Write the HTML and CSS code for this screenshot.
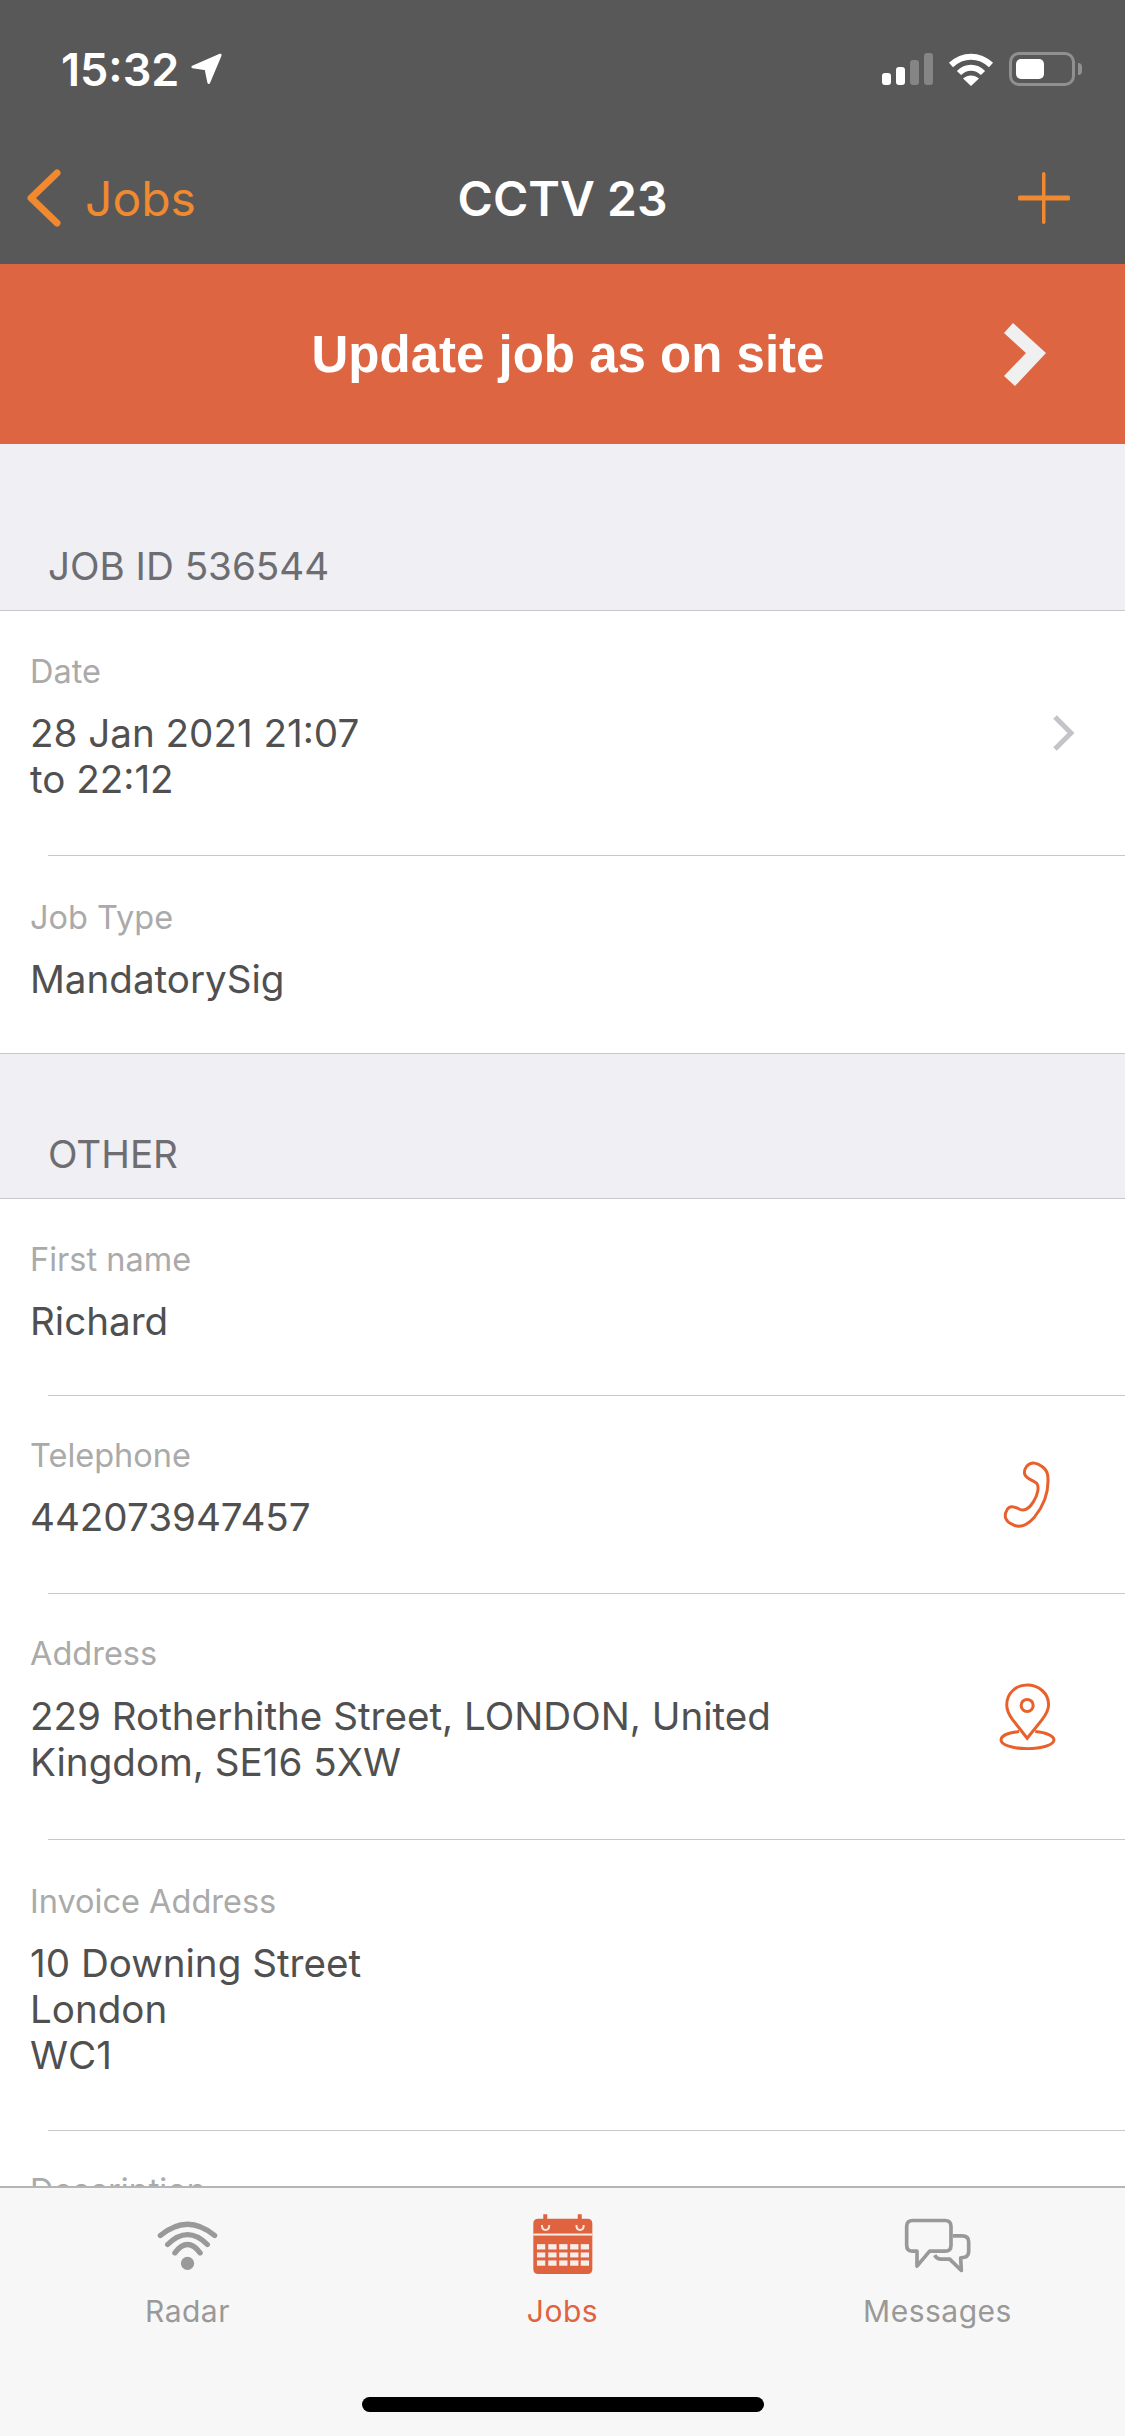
FILE: index.html
```html
<!DOCTYPE html>
<html lang="en">

<head>
    <meta charset="UTF-8">
    <meta name="viewport" content="width=device-width, initial-scale=1.0">
    <title>CCTV 23</title>
    <link rel="stylesheet" href="styles.css">
</head>

<body>
    <div class="phone">
        <header class="top-bar">
            <div class="status-bar">
                <div class="status-time">
                    <span>15:32</span>
                    <svg class="icon-location" viewBox="448 70 95 92">
                        <path d="M535 76 L456 110 L494 116 L502 155 Z" />
                    </svg>
                </div>
                <div class="status-icons">
                    <svg class="icon-signal" viewBox="0 0 51 32">
                        <rect x="0" y="20" width="9" height="12" rx="3" fill="#fff" />
                        <rect x="14" y="14" width="9" height="18" rx="3" fill="#fff" />
                        <rect x="28" y="7" width="9" height="25" rx="3" fill="#858585" />
                        <rect x="42" y="0" width="9" height="32" rx="3" fill="#858585" />
                    </svg>
                    <svg class="icon-wifi" viewBox="0 0 46 33">
                        <path d="M3 12 C15 1 31 1 43 12" />
                        <path d="M11 20 C18 13 28 13 35 20" />
                        <path d="M15 25.500 L23 33 L31 25.500 C26 21.500 20 21.500 15 25.500 Z" class="wifi-dot" />
                    </svg>
                    <div class="battery">
                        <div class="battery-fill"></div>
                    </div>
                    <div class="battery-nub"></div>
                </div>
            </div>
            <nav class="nav-bar">
                <a class="nav-back">
                    <svg class="icon-back" viewBox="0 0 34 58">
                        <path d="M30 4 L4 29 L30 54" />
                    </svg>
                    <span>Jobs</span>
                </a>
                <span class="nav-title">CCTV 23</span>
                <svg class="icon-plus" viewBox="0 0 52 52">
                    <rect x="24" y="0" width="3.500" height="52" rx="1.700" />
                    <rect x="0" y="23.500" width="52" height="5" rx="1.500" />
                </svg>
            </nav>
        </header>

        <div class="status-action">
            <span class="action-text">Update job as on site</span>
            <svg class="icon-action" viewBox="0 0 42 63">
                <path d="M9 0 L42 30 L11 63 L0 53 L22 30 L0 10 Z" />
            </svg>
        </div>

        <main class="content">
            <h3 class="section-title first">JOB ID 536544</h3>
            <section class="section">
                <div class="row">
                    <div class="row-text">
                        <div class="row-label">Date</div>
                        <div class="row-value">28 Jan 2021 21:07<br>to 22:12</div>
                    </div>
                    <svg class="icon-more" viewBox="0 0 24 38">
                        <path d="M4 3 L20 19 L4 35" />
                    </svg>
                </div>
                <div class="row row-low">
                    <div class="row-text">
                        <div class="row-label">Job Type</div>
                        <div class="row-value">MandatorySig</div>
                    </div>
                </div>
            </section>

            <h3 class="section-title">OTHER</h3>
            <section class="section">
                <div class="row row-short">
                    <div class="row-text">
                        <div class="row-label">First name</div>
                        <div class="row-value">Richard</div>
                    </div>
                </div>
                <div class="row">
                    <div class="row-text">
                        <div class="row-label">Telephone</div>
                        <div class="row-value">442073947457</div>
                    </div>
                    <svg class="icon-phone" viewBox="130 90 145 207">
                        <path d="M222 98 C205 98 193 115 195 130 C197 145 220 150 232 160 C240 170 235 195 222 215 C210 235 195 245 180 238 C165 230 150 225 142 240 C130 260 140 275 155 282 C175 295 200 290 225 262 C255 225 270 180 265 135 C262 115 240 100 222 98 Z" />
                    </svg>
                </div>
                <div class="row row-wide">
                    <div class="row-text">
                        <div class="row-label">Address</div>
                        <div class="row-value">229 Rotherhithe Street, LONDON, United<br>Kingdom, SE16 5XW</div>
                    </div>
                    <svg class="icon-pin" viewBox="114 760 170 200">
                        <path d="M198 925 L155 870 C140 850 137 840 137 825 C137 790 165 766 198 766 C232 766 262 790 262 825 C262 840 258 850 242 870 Z" />
                        <circle cx="198" cy="827" r="18" />
                        <path d="M174 905 C140 908 120 918 120 930 C120 945 155 956 198 956 C240 956 278 945 278 930 C278 918 255 908 222 905" />
                    </svg>
                </div>
                <div class="row row-low row-invoice">
                    <div class="row-text">
                        <div class="row-label">Invoice Address</div>
                        <div class="row-value">10 Downing Street<br>London<br>WC1</div>
                    </div>
                </div>
                <div class="row">
                    <div class="row-text">
                        <div class="row-label">Description</div>
                    </div>
                </div>
            </section>
        </main>

        <footer class="tab-bar">
            <div class="tabs">
                <div class="tab-item">
                    <div class="tab-icon">
                        <svg class="icon-radar" viewBox="75 50 190 160">
                            <path d="M88 103 Q170 35 252 103" />
                            <path d="M110 130 Q170 70 230 130" />
                            <path d="M132 155 Q170 105 208 155" />
                            <circle cx="170" cy="187" r="20" />
                        </svg>
                    </div>
                    <span>Radar</span>
                </div>
                <div class="tab-item active">
                    <div class="tab-icon">
                        <svg class="icon-calendar" viewBox="60 38 190 190">
                            <path d="M67 70 C67 60 72 55 82 55 L97 55 L97 42 L109 42 L109 55 L201 55 L201 42 L213 42 L213 55 L230 55 C240 55 245 60 245 70 L245 207 C245 217 240 222 230 222 L82 222 C72 222 67 217 67 207 Z" class="cal-body" />
                            <path d="M93 74 C93 94 115 94 115 74 M197 74 C197 94 219 94 219 74" class="cal-ring" />
                            <g class="cal-cell">
                                <rect x="67" y="100" width="178" height="6" />
                                <rect x="78" y="132" width="25" height="16" />
                                <rect x="112" y="132" width="25" height="16" />
                                <rect x="145" y="132" width="25" height="16" />
                                <rect x="178" y="132" width="25" height="16" />
                                <rect x="210" y="132" width="25" height="16" />
                                <rect x="78" y="157" width="25" height="15" />
                                <rect x="112" y="157" width="25" height="15" />
                                <rect x="145" y="157" width="25" height="15" />
                                <rect x="178" y="157" width="25" height="15" />
                                <rect x="210" y="157" width="25" height="15" />
                                <rect x="78" y="181" width="25" height="16" />
                                <rect x="112" y="181" width="25" height="16" />
                                <rect x="145" y="181" width="25" height="16" />
                                <rect x="178" y="181" width="25" height="16" />
                                <rect x="210" y="181" width="25" height="16" />
                            </g>
                        </svg>
                    </div>
                    <span>Jobs</span>
                </div>
                <div class="tab-item">
                    <div class="tab-icon">
                        <svg class="icon-messages" viewBox="55 45 210 170">
                            <path d="M84 58 L181 58 C193 58 199 65 199 76 L199 132 C199 144 193 150 181 150 L135 150 L97 195 L97 150 L84 150 C72 150 66 144 66 132 L66 76 C66 65 72 58 84 58 Z" />
                            <path d="M205 104 L232 104 C245 104 252 111 252 122 L252 152 C252 163 245 170 228 170 L230 208 L195 174 L170 174 C160 174 154 170 150 162" />
                        </svg>
                    </div>
                    <span>Messages</span>
                </div>
            </div>
            <div class="home-bar"></div>
        </footer>
    </div>
</body>

</html>
```

FILE: styles.css
```css
* {
    box-sizing: border-box;
}

body {
    margin: 0;
    font-family: Inter, "Liberation Sans", sans-serif;
    color: #505050;
}

.phone {
    display: flex;
    flex-direction: column;
    width: 1125px;
    height: 2436px;
    overflow: hidden;
    background-color: #efeff4;
}

/* top bar */
.top-bar {
    flex: none;
    height: 264px;
    background-color: #585858;
    color: #fff;
}

.status-bar {
    display: flex;
    justify-content: space-between;
    align-items: center;
    height: 138px;
    padding: 0 43px 0 61px;
}

.status-time {
    display: flex;
    align-items: center;
    gap: 11px;
    font-size: 45px;
    font-weight: 600;
}

.icon-location {
    width: 33px;
    height: 32px;
    fill: #fff;
    stroke: #fff;
    stroke-width: 8px;
    stroke-linejoin: round;
}

.status-icons {
    display: flex;
    align-items: center;
}

.icon-signal {
    width: 51px;
    height: 32px;
    margin-right: 15px;
}

.icon-wifi {
    width: 46px;
    height: 33px;
    margin-right: 15px;
    fill: none;
    stroke: #fff;
    stroke-width: 6px;
}

.icon-wifi .wifi-dot {
    fill: #fff;
    stroke: none;
}

.battery {
    width: 66px;
    height: 34px;
    padding: 4px;
    border: 3px solid #909090;
    border-radius: 10px;
}

.battery-fill {
    width: 28px;
    height: 100%;
    border-radius: 5px;
    background-color: #fff;
}

.battery-nub {
    width: 4px;
    height: 12px;
    margin-left: 3px;
    border-radius: 0 4px 4px 0;
    background-color: #909090;
}

.nav-bar {
    display: grid;
    grid-template-columns: 1fr auto 1fr;
    align-items: center;
    height: 120px;
}

.nav-back {
    display: flex;
    align-items: center;
    gap: 24px;
    margin-left: 27px;
    font-size: 48px;
    color: #f0892f;
}

.icon-back {
    width: 34px;
    height: 58px;
    fill: none;
    stroke: #f0892f;
    stroke-width: 7px;
    stroke-linecap: round;
    stroke-linejoin: round;
}

.nav-title {
    font-size: 48px;
    font-weight: 600;
}

.icon-plus {
    justify-self: end;
    width: 52px;
    height: 52px;
    margin-right: 55px;
    fill: #f0892f;
}

/* update job band */
.status-action {
    position: relative;
    display: flex;
    justify-content: center;
    align-items: center;
    flex: none;
    height: 180px;
    padding-left: 11px;
    background-color: #de6542;
    color: #fff;
}

.action-text {
    font-family: "Liberation Sans", Arial, sans-serif;
    font-size: 51px;
    font-weight: bold;
}

.icon-action {
    position: absolute;
    right: 79px;
    top: 59px;
    width: 42px;
    height: 63px;
    fill: #f0f0f0;
}

/* list */
.content {
    flex: 1;
    min-height: 0;
    overflow: hidden;
}

.section-title {
    margin: 0;
    padding: 77px 0 21px 48px;
    font-size: 38.600px;
    line-height: 46px;
    font-weight: 400;
    color: #6d6d72;
}

.section-title.first {
    padding-top: 99px;
}

.section {
    border-top: 1px solid #c8c7cc;
    border-bottom: 1px solid #c8c7cc;
    background-color: #fff;
}

.row {
    position: relative;
    display: flex;
    justify-content: space-between;
    align-items: center;
    padding: 0 48px 0 30px;
}

.row + .row::before {
    content: "";
    position: absolute;
    top: 0;
    left: 48px;
    right: 0;
    height: 1px;
    background-color: #c8c7cc;
}

.row-text {
    padding: 38px 0 53px;
}

.row-low .row-text {
    padding: 40px 0 51px;
}

.row-short .row-text {
    padding-bottom: 51px;
}

.row-wide .row-text {
    padding-bottom: 54px;
}

.row-wide .row-label {
    margin-bottom: 16px;
}

.row-invoice .row-text {
    padding-bottom: 52px;
}

.row-label {
    margin-bottom: 15px;
    font-size: 32.500px;
    line-height: 46px;
    color: #aaa;
}

.row-value {
    font-size: 38.600px;
    line-height: 46px;
}

.icon-more {
    width: 24px;
    height: 38px;
    margin-right: 2px;
    fill: none;
    stroke: #c4c4c8;
    stroke-width: 5px;
}

.icon-phone,
.icon-pin {
    fill: none;
    stroke: #e8602c;
    stroke-width: 9px;
}

.icon-phone {
    width: 48px;
    height: 69px;
    margin-right: 26px;
}

.icon-pin {
    width: 57px;
    height: 67px;
    margin-right: 21px;
}

/* bottom tabs */
.tab-bar {
    flex: none;
    height: 250px;
    border-top: 2px solid #b5b5b5;
    background-color: #f7f7f7;
}

.tabs {
    display: grid;
    grid-template-columns: repeat(3, 1fr);
}

.tab-item {
    display: flex;
    flex-direction: column;
    align-items: center;
    height: 209px;
    padding-top: 24px;
    font-size: 30px;
    line-height: 40px;
    letter-spacing: .5px;
    color: #999;
}

.tab-item.active {
    color: #e0633f;
}

.tab-icon {
    display: flex;
    justify-content: center;
    align-items: center;
    height: 64px;
    margin-bottom: 15px;
}

.icon-radar {
    width: 63px;
    height: 53px;
    fill: none;
    stroke: #999;
    stroke-width: 16px;
    stroke-linecap: round;
}

.icon-radar circle {
    fill: #999;
    stroke: none;
}

.icon-calendar {
    width: 63px;
    height: 63px;
}

.cal-body {
    fill: #e0633f;
}

.cal-ring {
    fill: none;
    stroke: #f8e6df;
    stroke-width: 6px;
}

.cal-cell {
    fill: #f8eee9;
}

.icon-messages {
    width: 70px;
    height: 57px;
    fill: none;
    stroke: #999;
    stroke-width: 11px;
    stroke-linejoin: round;
}

.home-bar {
    width: 402px;
    height: 15px;
    margin: 0 auto;
    border-radius: 8px;
    background-color: #000;
}
```
